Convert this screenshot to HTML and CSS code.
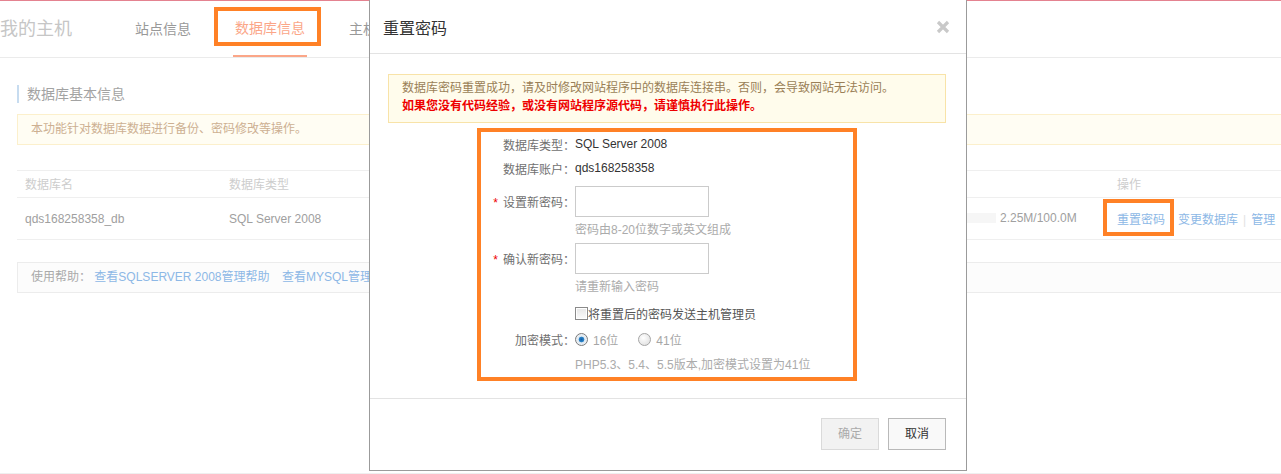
FILE: index.html
```html
<!DOCTYPE html>
<html lang="zh-CN">
<head>
<meta charset="utf-8">
<title>重置密码</title>
<link rel="stylesheet" href="styles.css">
</head>
<body>
<div class="topline"></div>
<header class="hd">
  <div class="brand">我的主机</div>
  <nav class="tabs">
    <a class="tab">站点信息</a>
    <a class="tab active">数据库信息<span class="mark mark-tab"></span></a>
    <a class="tab">主机</a>
  </nav>
</header>

<main class="content">
  <h2 class="sec-title">数据库基本信息</h2>
  <div class="tip">本功能针对数据库数据进行备份、密码修改等操作。</div>

  <table class="grid">
    <colgroup>
      <col class="c1"><col class="c2"><col class="c3"><col class="c4"><col class="c5">
    </colgroup>
    <thead>
      <tr><th>数据库名</th><th>数据库类型</th><th>状态</th><th>空间使用</th><th>操作</th></tr>
    </thead>
    <tbody>
      <tr>
        <td>qds168258358_db</td>
        <td>SQL Server 2008</td>
        <td>正常</td>
        <td><span class="usage"><span class="bar"></span><span>2.25M/100.0M</span></span></td>
        <td class="ops"><a class="link reset">重置密码<span class="mark mark-op"></span></a><a class="link">变更数据库</a><span class="sep">|</span><a class="link">管理</a></td>
      </tr>
    </tbody>
  </table>

  <div class="help">
    <span class="help-label">使用帮助：</span>
    <a class="link">查看SQLSERVER 2008管理帮助</a>
    <a class="link">查看MYSQL管理帮助</a>
  </div>
</main>
<div class="foot-line"></div>

<div class="modal">
  <div class="modal-hd">
    <span class="modal-title">重置密码</span>
    <svg class="close" width="14" height="14" viewBox="0 0 14 14"><path d="M2 2L12 12M12 2L2 12" stroke="#c9c9c9" stroke-width="3.2" stroke-linecap="butt"/></svg>
  </div>
  <div class="modal-bd">
    <div class="notice">
      <p class="n1">数据库密码重置成功，请及时修改网站程序中的数据库连接串。否则，会导致网站无法访问。</p>
      <p class="n2">如果您没有代码经验，或没有网站程序源代码，请谨慎执行此操作。</p>
    </div>
    <div class="form">
      <div class="row r1"><span class="lbl">数据库类型：</span><span class="val">SQL Server 2008</span></div>
      <div class="row r2"><span class="lbl">数据库账户：</span><span class="val">qds168258358</span></div>
      <div class="row rin rin1"><span class="lbl"><i class="req">*</i>设置新密码：</span><span class="input"></span></div>
      <div class="hint h1"><span class="lbl"></span><span>密码由8-20位数字或英文组成</span></div>
      <div class="row rin rin2"><span class="lbl"><i class="req">*</i>确认新密码：</span><span class="input"></span></div>
      <div class="hint h2"><span class="lbl"></span><span>请重新输入密码</span></div>
      <div class="row rchk"><span class="lbl"></span><span class="chk"></span><span class="chk-text">将重置后的密码发送主机管理员</span></div>
      <div class="row rradio"><span class="lbl">加密模式：</span><span class="radio on"></span><span class="rtext">16位</span><span class="radio"></span><span class="rtext">41位</span></div>
      <div class="hint h3"><span class="lbl"></span><span>PHP5.3、5.4、5.5版本,加密模式设置为41位</span></div>
    </div>
  </div>
  <div class="modal-ft">
    <span class="btn btn-ok">确定</span>
    <span class="btn btn-cancel">取消</span>
  </div>
</div>
</body>
</html>
```
FILE: styles.css
```css
* { box-sizing: border-box; }
html, body { margin: 0; padding: 0; }
body {
  width: 1281px;
  height: 474px;
  overflow: hidden;
  position: relative;
  background: #fff;
  font-family: "Liberation Sans", "Noto Sans CJK SC", sans-serif;
  font-size: 12px;
  color: #999;
}
a { text-decoration: none; cursor: pointer; }
p { margin: 0; }

.topline { height: 1px; background: #e48290; }

.hd {
  height: 57px;
  border-bottom: 1px solid #ebebeb;
  display: flex;
  align-items: stretch;
}
.brand {
  font-size: 18px;
  color: #c6c6c6;
  line-height: 56px;
  width: 72px;
}
.tabs { display: flex; margin-left: 61px; gap: 40px; }
.tab {
  position: relative;
  font-size: 14px;
  color: #999;
  line-height: 56px;
  padding: 0 2px;
  white-space: nowrap;
}
.tab.active { color: #fba688; border-bottom: 2px solid #fba688; line-height: 54px; }

.mark { position: absolute; border: 4px solid #ff8126; pointer-events: none; }
.mark-tab { left: -19px; top: 6px; width: 107px; height: 39px; }
.mark-op { left: -14px; top: -14px; width: 71px; height: 37px; }

.content { margin-left: 17px; width: 1280px; }
.sec-title {
  margin: 27px 0 0;
  font-size: 14px;
  font-weight: normal;
  color: #a3a3a3;
  line-height: 18px;
  border-left: 2px solid #c7dcf0;
  padding-left: 8px;
}
.tip {
  margin-top: 11px;
  height: 31px;
  line-height: 29px;
  padding-left: 13px;
  background: #fffdf3;
  border: 1px solid #fcf0cc;
  color: #cdb092;
}

.grid {
  margin-top: 25px;
  width: 1280px;
  border-collapse: collapse;
  table-layout: fixed;
}
.c1 { width: 204px; }
.c2 { width: 300px; }
.c3 { width: 347px; }
.c4 { width: 241px; }
.grid th, .grid td { text-align: left; padding: 0 0 0 8px; white-space: nowrap; }
.grid th {
  font-weight: normal;
  color: #cdcdcd;
  height: 27px;
  padding-bottom: 2px;
  border-top: 1px solid #efefef;
  border-bottom: 1px solid #efefef;
}
.grid td {
  height: 42px;
  color: #a0a0a0;
  border-bottom: 1px solid #efefef;
}
.usage { display: inline-flex; align-items: center; gap: 4px; }
.bar { width: 120px; height: 10px; background: #f6f6f6; }
.link { color: #8db8e6; }
.reset { position: relative; margin-right: 13px; }
.sep { color: #e2e2e2; margin: 0 5px; }

.help {
  margin-top: 22px;
  height: 31px;
  line-height: 29px;
  padding-left: 13px;
  background: #fcfcfc;
  border: 1px solid #ececec;
  white-space: nowrap;
}
.help-label { color: #aaa; }
.help .link + .link { margin-left: 9px; }

.foot-line { margin-top: 180px; height: 2px; background: #efefef; }

/* modal */
.modal {
  position: absolute;
  left: 369px;
  top: -1px;
  width: 598px;
  height: 472px;
  background: #fff;
  border: 1px solid #9b9b9b;
  display: flex;
  flex-direction: column;
}
.modal-hd {
  height: 54px;
  flex: none;
  border-bottom: 1px solid #e3e3e3;
  display: flex;
  align-items: center;
  justify-content: space-between;
  padding: 0 16px 0 13px;
}
.modal-title { font-size: 16px; color: #333; }
.close { display: block; }

.modal-bd { padding: 20px 20px 0 18px; height: 345px; flex: none; border-bottom: 1px solid #e3e3e3; }
.notice {
  height: 49px;
  background: #fffcec;
  border: 1px solid #f8e3a8;
  padding: 4px 13px 0;
  line-height: 18px;
}
.n1 { color: #9a7f57; }
.n2 { color: #ee0000; font-weight: bold; }

.form {
  width: 380px;
  margin: 5px auto 0;
  border: 4px solid #ff8126;
  padding: 0 0 2px;
}
.row, .hint { display: flex; align-items: center; }
.lbl {
  width: 94px;
  flex: none;
  text-align: right;
  color: #707070;
  white-space: nowrap;
}
.val { color: #333; }
.r1 { height: 24px; }
.r2 { height: 24px; }
.rin { height: 31px; }
.rin1 { margin-top: 6px; }
.rin2 { margin-top: 0; }
.req { font-style: normal; color: #e00; margin-right: 5px; }
.input {
  width: 134px;
  height: 31px;
  border: 1px solid #cbcbcb;
  background: #fff;
}
.hint { height: 20px; line-height: 20px; color: #ababab; }
.h1, .h2 { margin: 3px 0; }
.rchk { height: 20px; margin-top: 6px; }
.chk {
  width: 13px;
  height: 13px;
  border: 1px solid #8a8a8a;
  background: linear-gradient(#e6e6e6, #fbfbfb);
  box-shadow: inset 0 0 0 1px #fff;
}
.chk-text { color: #555; }
.rradio { height: 20px; margin-top: 6px; }
.radio {
  width: 13px;
  height: 13px;
  border-radius: 50%;
  border: 1px solid #a5a5a5;
  background: radial-gradient(circle at 40% 35%, #fff 0, #e2e2e2 80%);
}
.radio.on {
  background: radial-gradient(circle, #0f5ea8 0, #2f86c8 2.5px, #dfe9f2 3.2px, #f7f7f7 100%);
  border-color: #7a7a7a;
}
.rtext { color: #a6a6a6; margin: 0 20px 0 5px; }
.h3 { margin-top: 6px; }

.modal-ft {
  flex: 1;
  display: flex;
  justify-content: flex-end;
  align-items: flex-start;
  gap: 9px;
  padding: 19px 20px 0 0;
}
.btn {
  width: 58px;
  height: 32px;
  line-height: 30px;
  text-align: center;
  font-size: 12px;
}
.btn-ok { background: #f2f2f2; border: 1px solid #dadada; color: #aaa; }
.btn-cancel { background: #f9f9f9; border: 1px solid #b9b9b9; color: #333; }
```
